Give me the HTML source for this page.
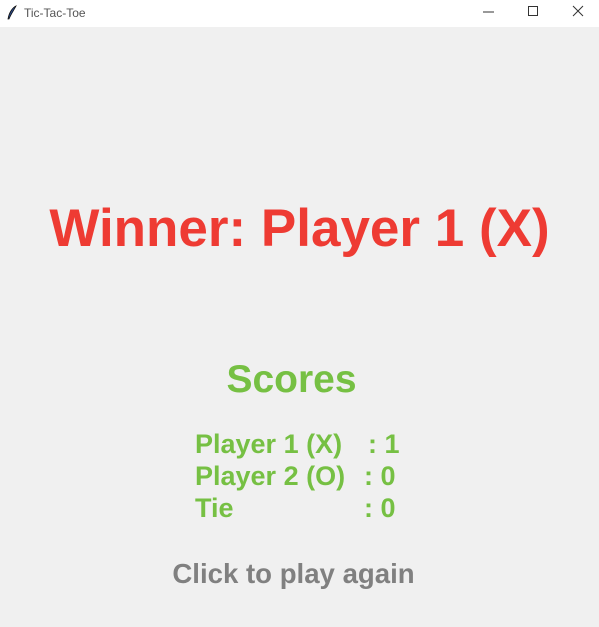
<!DOCTYPE html>
<html><head><meta charset="utf-8"><style>
body{margin:0;width:599px;height:627px;background:#f0f0f0;position:relative;overflow:hidden;font-family:"Liberation Sans",sans-serif;font-weight:bold}
.tb{position:absolute;left:0;top:0;width:599px;height:27px;background:#fff}
.tb .t{position:absolute;left:24px;top:6px;font-size:12px;font-weight:normal;color:#555}
.a{position:absolute;line-height:1;white-space:nowrap}
.c{left:0;width:599px;text-align:center}
.g{color:#76c043;font-size:27px}
</style></head><body>
<div class="tb">
<svg style="position:absolute;left:6px;top:5px" width="12" height="16" viewBox="0 0 12 16"><path d="M10 1 C6 3 3 8 2 14 L3 14 C5 9 8 5 10 1Z" fill="#2a4a8a" stroke="#111" stroke-width="0.8"/></svg>
<span class="t">Tic-Tac-Toe</span>
<svg style="position:absolute;left:480px;top:5px" width="110" height="14"><line x1="3" y1="7" x2="14" y2="7" stroke="#333"/><rect x="48.5" y="1.5" width="9" height="9" fill="none" stroke="#333"/><path d="M93 1 L103 11 M103 1 L93 11" stroke="#333"/></svg>
</div>
<div class="a c" style="top:202px;font-size:53px;color:#ee3b33">Winner: Player 1 (X)</div>
<div class="a c" style="top:360px;font-size:39px;color:#76c043;left:-8px">Scores</div>
<div class="a g" style="top:431px;left:195px">Player 1 (X)</div><div class="a g" style="top:431px;left:368px">: 1</div>
<div class="a g" style="top:463px;left:195px">Player 2 (O)</div><div class="a g" style="top:463px;left:364px">: 0</div>
<div class="a g" style="top:495px;left:195px">Tie</div><div class="a g" style="top:495px;left:364px">: 0</div>
<div class="a c" style="top:560px;font-size:27.6px;color:#808080;left:-6px">Click to play again</div>
</body></html>
